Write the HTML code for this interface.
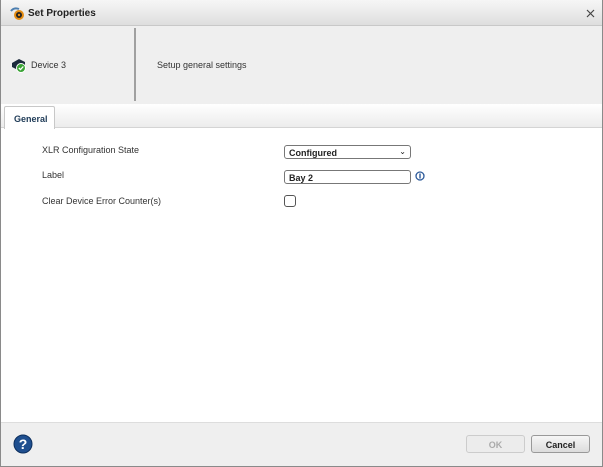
<!DOCTYPE html>
<html><head><style>
*{margin:0;padding:0;box-sizing:border-box}
body{width:603px;height:467px;overflow:hidden;background:#fff;font-family:"Liberation Sans",Arial,sans-serif;font-size:9px;color:#333}
.dlg{position:absolute;left:0;top:0;width:603px;height:467px;border:1px solid #8a8a8a;border-top:none;}
.title{position:absolute;left:0;top:0;width:601px;height:26px;background:linear-gradient(#f6f6f6,#dedede);border-bottom:1px solid #c8c8c8}
.title b{position:absolute;left:27px;top:8px;font-size:10px;color:#222}
.hdr{position:absolute;left:0;top:26px;width:601px;height:78px;background:#efefef}
.vsep{position:absolute;left:133px;top:2px;width:2px;height:73px;background:#a0a0a0}
.tabs{position:absolute;left:0;top:104px;width:601px;height:24px;background:linear-gradient(#fff,#ececec);border-bottom:1px solid #d4d4d4}
.tab{position:absolute;left:3px;top:2px;width:51px;height:23px;background:#fff;border:1px solid #c8c8c8;border-bottom:none;border-radius:2px 2px 0 0;font-weight:bold;color:#1f3b57;font-size:9px;padding:7px 0 0 9px}
.lbl{position:absolute;left:41px;font-size:9px;color:#333}
.sel{position:absolute;left:283px;top:145px;width:127px;height:14px;border:1px solid #777;border-radius:3px;font-weight:bold;padding:2px 4px;color:#222}
.inp{position:absolute;left:283px;top:170px;width:127px;height:14px;border:1px solid #777;border-radius:3px;font-weight:bold;padding:2px 4px;color:#222}
.cb{position:absolute;left:283px;top:195px;width:12px;height:12px;border:1px solid #555;border-radius:3px}
.foot{position:absolute;left:0;top:422px;width:601px;height:44px;background:#efefef;border-top:1px solid #ddd}
.btn{position:absolute;top:12px;height:18px;border:1px solid #aaa;border-radius:3px;text-align:center;padding-top:4px;font-size:9px;font-weight:bold}
</style></head><body>
<div class="dlg">
<div class="title">
<svg style="position:absolute;left:9px;top:6px" width="15" height="15"><path d="M1 5 Q4 1 9 3" stroke="#4d7fb0" stroke-width="2" fill="none"/><circle cx="9" cy="9" r="5" fill="#e48c12"/><circle cx="9" cy="9" r="3" fill="#222"/><circle cx="9" cy="9" r="1.2" fill="#e48c12"/></svg>
<b>Set Properties</b>
<svg style="position:absolute;left:585px;top:9px" width="9" height="9"><path d="M1 1L8 8M8 1L1 8" stroke="#444" stroke-width="1.2"/></svg>
</div>
<div class="hdr">
<svg style="position:absolute;left:10px;top:32px" width="16" height="15"><path d="M1 5 L8 1 L14 4 L14 8 L7 12 L1 9Z" fill="#1b2a3c"/><circle cx="10" cy="10" r="4.5" fill="#3aa335" stroke="#fff"/><path d="M7.8 10 L9.5 11.6 L12.3 8.5" stroke="#fff" stroke-width="1.3" fill="none"/></svg>
<span style="position:absolute;left:30px;top:34px;font-size:9px">Device 3</span>
<div class="vsep"></div>
<span style="position:absolute;left:156px;top:34px;font-size:9px">Setup general settings</span>
</div>
<div class="tabs"><div class="tab">General</div></div>
<span class="lbl" style="top:145px">XLR Configuration State</span>
<span class="lbl" style="top:170px">Label</span>
<span class="lbl" style="top:196px">Clear Device Error Counter(s)</span>
<div class="sel">Configured<span style="position:absolute;right:4px;top:1px;font-weight:normal;font-size:8px">⌄</span></div>
<div class="inp">Bay 2</div>
<svg style="position:absolute;left:414px;top:171px" width="10" height="10"><circle cx="5" cy="5" r="4" fill="none" stroke="#2d5a9a" stroke-width="1.3"/><rect x="4.3" y="2.5" width="1.4" height="5" fill="#2d5a9a"/></svg>
<div class="cb"></div>
<div class="foot">
<svg style="position:absolute;left:12px;top:11px" width="20" height="20"><circle cx="10" cy="10" r="9" fill="#1f4f8f" stroke="#0d2f5e"/><text x="10" y="15" text-anchor="middle" fill="#fff" font-size="14" font-weight="bold" font-family="Liberation Sans">?</text></svg>
<div class="btn" style="left:465px;width:59px;color:#aaa;background:#ececec;border-color:#ccc">OK</div>
<div class="btn" style="left:530px;width:59px;color:#222;background:linear-gradient(#f6f6f6,#dcdcdc);border-color:#999">Cancel</div>
</div>
</div>
</body></html>
